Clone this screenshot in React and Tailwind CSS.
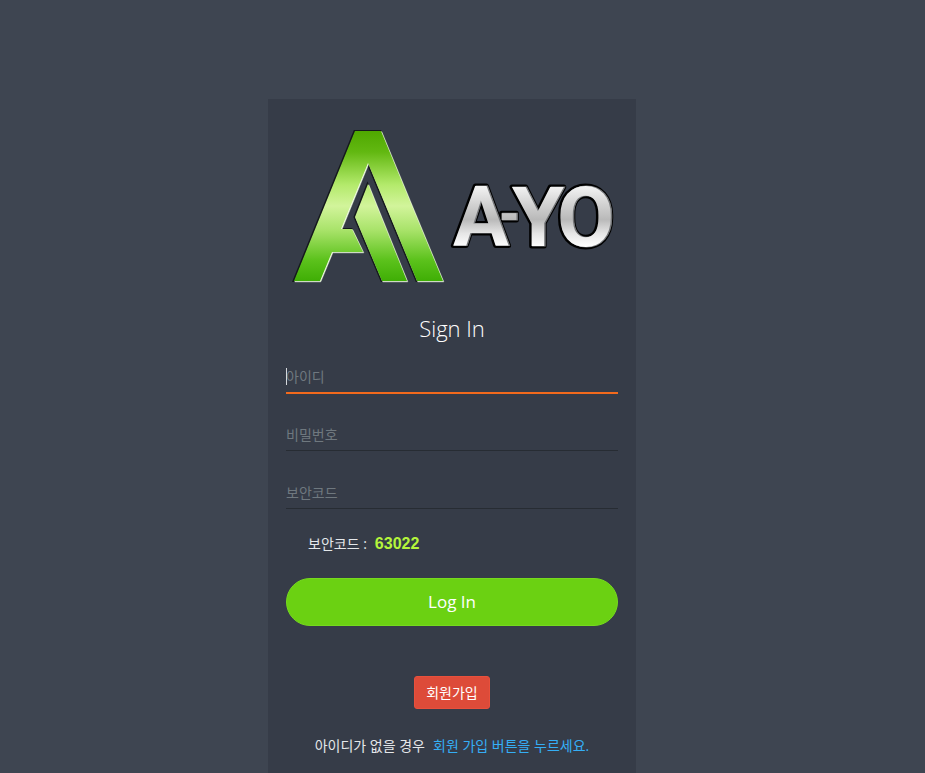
import React from "react";

const sans = "font-['Open_Sans','Noto_Sans_CJK_KR',sans-serif]";

function Logo() {
  return (
    <svg viewBox="0 0 332 170" className="block w-full" role="img" aria-label="A-YO">
      <defs>
        <linearGradient id="leaf" gradientUnits="userSpaceOnUse" x1="0" y1="12" x2="0" y2="162">
          <stop offset="0" stopColor="#4fa800" />
          <stop offset="0.14" stopColor="#62b811" />
          <stop offset="0.36" stopColor="#b4ea6c" />
          <stop offset="0.5" stopColor="#d2f49b" />
          <stop offset="0.66" stopColor="#a9e36a" />
          <stop offset="0.86" stopColor="#5cc21c" />
          <stop offset="1" stopColor="#3fae05" />
        </linearGradient>
        <linearGradient id="steel" gradientUnits="userSpaceOnUse" x1="0" y1="67" x2="0" y2="128">
          <stop offset="0" stopColor="#f4f4f4" />
          <stop offset="0.3" stopColor="#d2d2d2" />
          <stop offset="0.55" stopColor="#b9b9b9" />
          <stop offset="0.78" stopColor="#e6e6e6" />
          <stop offset="1" stopColor="#ffffff" />
        </linearGradient>
        <g id="mark">
          <path d="M69 12H95L157 162H131L82 44L55 110H66L77 133H46L34 162H8Z" />
          <path d="M82 65L121 162H96L69 98Z" />
        </g>
        <g id="word" fontFamily="Roboto,sans-serif" fontWeight="700" fontSize="83">
          <text x="167" y="127">A</text>
          <text x="214" y="113" fontFamily="'Open Sans',sans-serif" fontSize="56">-</text>
          <text x="226" y="127" fontFamily="'Open Sans',sans-serif">Y</text>
          <text x="271" y="127">O</text>
        </g>
      </defs>
      <use href="#mark" fill="#15191c" stroke="#15191c" strokeWidth="2" transform="translate(-0.5 0)" />
      <use href="#mark" fill="#f2ffe4" stroke="#f2ffe4" strokeWidth="0.5" transform="translate(0.8 0.8)" />
      <use href="#mark" fill="url(#leaf)" />
      <use href="#word" fill="#000" stroke="#000" strokeWidth="5" strokeLinejoin="round" />
      <use href="#word" fill="#77797c" stroke="#77797c" strokeWidth="1" transform="translate(1 0)" />
      <use href="#word" fill="url(#steel)" />
    </svg>
  );
}

function Field({ label, type = "text", active = false }) {
  return (
    <div className="relative h-[58px]">
      <input
        type={type}
        aria-label={label}
        placeholder={label}
        className={
          "block w-full bg-transparent pt-1 text-sm leading-6 text-[#e4e7ea] placeholder:text-[#6f787f] outline-none rounded-none " +
          (active ? "h-[38px] border-b-2 border-[#f36a1d] caret-transparent" : "h-[37px] border-b border-[#272c33]")
        }
      />
      {active && <span className="absolute left-0 top-3 h-[17px] w-px bg-[#d5d8dc]" />}
    </div>
  );
}

export default function App() {
  return (
    <div className={"flex min-h-screen flex-col items-center bg-[#3e4551] pr-[21px] pt-[99px] text-sm text-[#e4e7ea] " + sans}>
      <main className="w-full max-w-[368px] flex-1 bg-[#363c48] px-[18px] pb-10 pt-5">
        <Logo />
        <form onSubmit={(e) => e.preventDefault()}>
          <h1 className="mt-[23px] mb-3 text-center text-[22px] font-light leading-8 text-white">Sign In</h1>
          <Field label="아이디" active />
          <Field label="비밀번호" type="password" />
          <Field label="보안코드" />
          <p className="mt-1 flex items-center gap-2 pl-[22px] leading-5">
            <span>보안코드 :</span>
            <strong className="font-['Liberation_Sans',sans-serif] text-base leading-5 text-[#b5f53b]">63022</strong>
          </p>
          <button type="submit" className="mt-6 block h-12 w-full rounded-full border border-[#76da1e] bg-[#6bd112] text-[17px] text-white">
            Log In
          </button>
        </form>
        <div className="mt-[50px] flex justify-center">
          <button type="button" className="h-[33px] rounded-[3px] border border-[#e8503c] bg-[#dd4b39] px-[11px] text-sm text-white">
            회원가입
          </button>
        </div>
        <p className="mt-[27px] flex justify-center gap-2 whitespace-nowrap leading-5">
          <span>아이디가 없을 경우</span>
          <a href="#join" className="text-[#35aef5]">회원 가입 버튼을 누르세요.</a>
        </p>
      </main>
    </div>
  );
}
